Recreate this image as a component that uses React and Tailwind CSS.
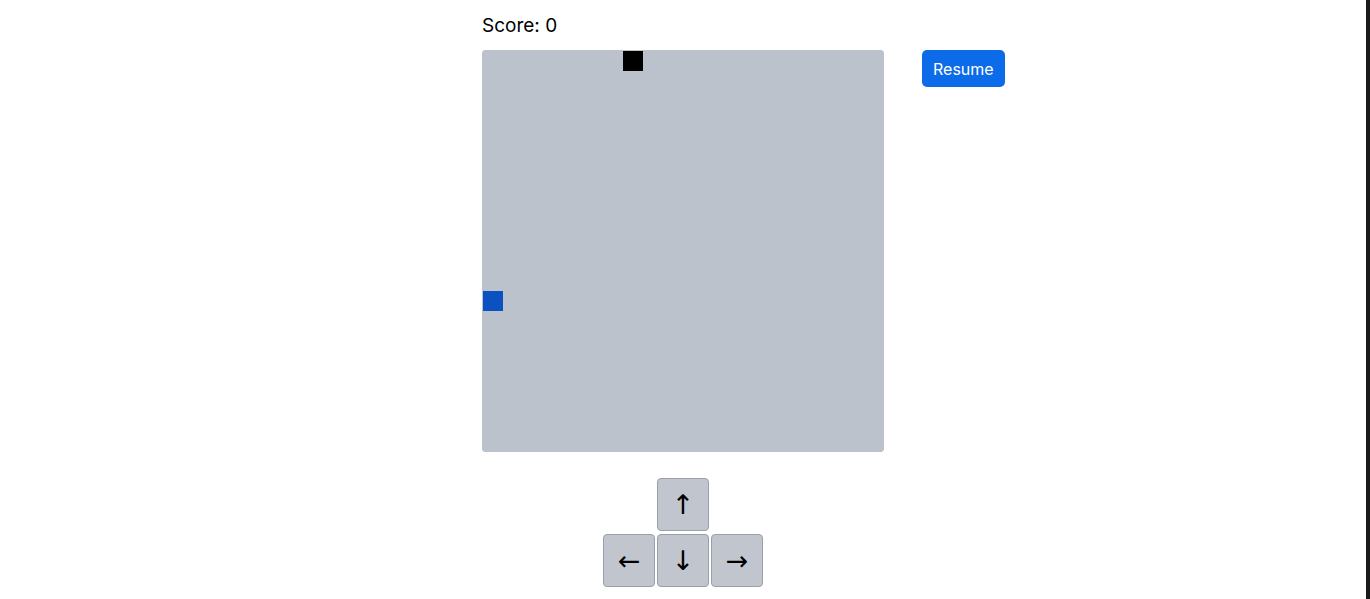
export default function App() {
  const font = { fontFamily: "Inter, 'Noto Sans', sans-serif" };
  const arrowBtn =
    "flex h-[53px] w-[52px] items-center justify-center rounded-[4px] border border-[#9aa0a8] bg-[#c1c6ce] font-['DejaVu_Sans',sans-serif] text-[27px] font-normal leading-none text-black";

  return (
    <div className="flex h-[599px] w-full bg-white" style={font}>
      <div className="flex flex-1 flex-col items-center">
        <div className="grid w-full grid-cols-[1fr_402px_1fr]">
          <div />
          <div className="flex flex-col">
            <div className="pt-[11px] text-[19px] leading-[30px] text-black">Score: 0</div>
            <div className="mt-[9px] grid h-[402px] w-[402px] grid-cols-[repeat(20,20px)] grid-rows-[repeat(20,20px)] rounded-[3px] border border-[#bcc2cb] bg-[#bcc2cb]">
              <div className="col-start-8 row-start-1 bg-black" />
              <div className="col-start-1 row-start-13 bg-[#0b51c1]" />
            </div>
          </div>
          <div className="pl-[38px] pt-[50px]">
            <button className="h-[37px] rounded-[5px] bg-[#0b6be9] px-[11px] text-[16px] text-white">
              Resume
            </button>
          </div>
        </div>
        <div className="mt-[26px] flex flex-col items-center gap-[3px]">
          <button className={arrowBtn}>↑</button>
          <div className="flex gap-[2px]">
            <button className={arrowBtn}>←</button>
            <button className={arrowBtn}>↓</button>
            <button className={arrowBtn}>→</button>
          </div>
        </div>
      </div>
      <div className="h-[599px] w-[4px] bg-[#1a1a1a]" />
    </div>
  );
}
